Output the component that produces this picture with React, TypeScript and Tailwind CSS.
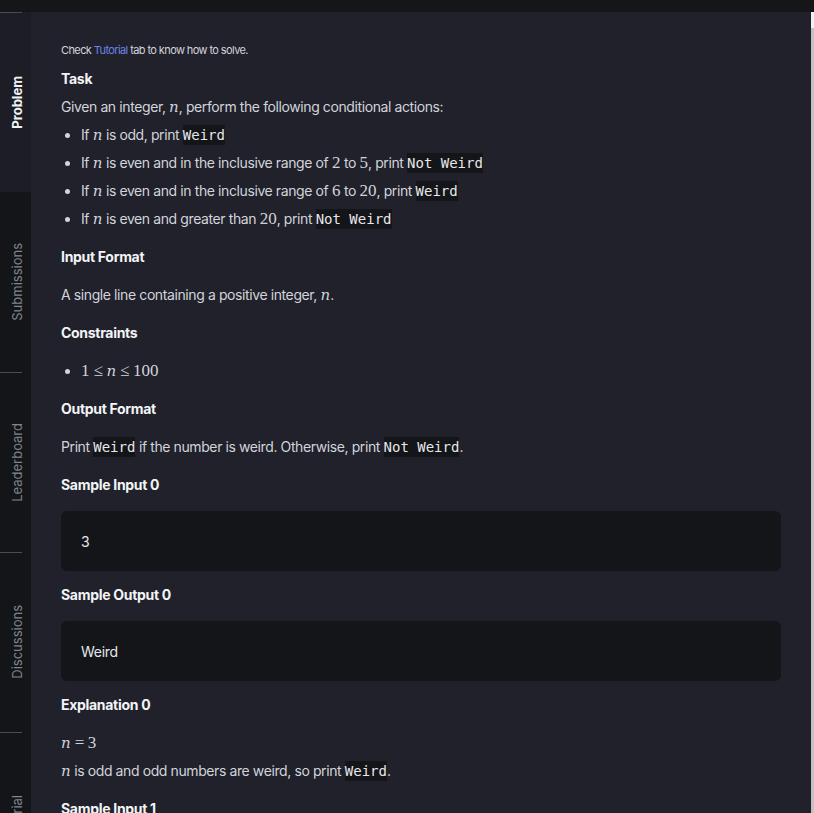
import React from "react";

const N = () => (
  <span className="font-['DejaVu_Serif',serif] italic text-[15px] tracking-normal">n</span>
);
const M = ({ children }: { children: React.ReactNode }) => (
  <span className="font-['Liberation_Serif',serif] text-[17px] tracking-normal">{children}</span>
);
const Rel = ({ children }: { children: React.ReactNode }) => (
  <span className="font-['Liberation_Serif',serif] text-[17px] mx-[4px]">{children}</span>
);
const C = ({ children }: { children: React.ReactNode }) => (
  <code className="bg-[#141519] py-[2px] font-['DejaVu_Sans_Mono',monospace] text-[14px] text-[#e6e7ea] tracking-normal">
    {children}
  </code>
);

const H = ({ children, className = "" }: { children: React.ReactNode; className?: string }) => (
  <div className={"h-[28px] leading-[28px] font-bold text-[14px] text-[#f3f4f6] tracking-[-0.3px] " + className}>{children}</div>
);
const P = ({ children, className = "" }: { children: React.ReactNode; className?: string }) => (
  <div className={"h-[28px] leading-[28px] text-[14px] text-[#d2d4da] whitespace-nowrap tracking-[-0.4px] " + className}>{children}</div>
);
const Li = ({ children, className = "" }: { children: React.ReactNode; className?: string }) => (
  <div className={"flex items-center h-[28px] text-[14px] text-[#d2d4da] whitespace-nowrap tracking-[-0.4px] " + className}>
    <span className="w-[5px] h-[5px] rounded-full bg-[#d2d4da] ml-[4px] mr-[11px] shrink-0" />
    <span className="leading-[28px]">{children}</span>
  </div>
);

const Tab = ({ label, active = false, line = true }: { label: string; active?: boolean; line?: boolean }) => (
  <div className={"relative h-[180px] shrink-0 flex items-center justify-center " + (active ? "bg-[#1c1d25]" : "bg-[#141519]")}>
    {line && <div className="absolute top-0 left-0 w-[22px] h-px bg-[#4b4c53]" />}
    <span
      className={
        "[writing-mode:vertical-rl] rotate-180 text-[13px] whitespace-nowrap pr-[4px] " +
        (active ? "font-bold text-[#f3f4f6]" : "text-[#7d868a]")
      }
    >
      {label}
    </span>
  </div>
);

export default function App() {
  return (
    <div className="w-[814px] h-[813px] overflow-hidden flex flex-col bg-[#20212b] font-['Inter',sans-serif]">
      <div className="h-[12px] shrink-0 bg-[#15161a]" />
      <div className="flex flex-1 min-h-0">
        <div className="w-[31px] shrink-0 flex flex-col overflow-hidden">
          <Tab label="Problem" active />
          <Tab label="Submissions" line={false} />
          <Tab label="Leaderboard" />
          <Tab label="Discussions" />
          <div className="relative h-[180px] shrink-0 flex items-start justify-center bg-[#141519]">
            <div className="absolute top-0 left-0 w-[22px] h-px bg-[#4b4c53]" />
            <span className="mt-[63px] [writing-mode:vertical-rl] rotate-180 text-[13px] whitespace-nowrap pr-[4px] text-[#7d868a]">
              Tutorial
            </span>
          </div>
        </div>
        <div className="flex-1 min-w-0 overflow-hidden pl-[30px] pr-[30px] pt-[30px]">
          <div className="h-[16px] leading-[16px] text-[11px] text-[#d2d4da] tracking-[-0.6px]">
            Check <span className="text-[#6b84e6]">Tutorial</span> tab to know how to solve.
          </div>
          <H className="mt-[7px]">Task</H>
          <P>
            Given an integer, <N />, perform the following conditional actions:
          </P>
          <Li>
            If <N /> is odd, print <C>Weird</C>
          </Li>
          <Li>
            If <N /> is even and in the inclusive range of <M>2</M> to <M>5</M>, print <C>Not Weird</C>
          </Li>
          <Li>
            If <N /> is even and in the inclusive range of <M>6</M> to <M>20</M>, print <C>Weird</C>
          </Li>
          <Li>
            If <N /> is even and greater than <M>20</M>, print <C>Not Weird</C>
          </Li>
          <H className="mt-[10px]">Input Format</H>
          <P className="mt-[10px]">
            A single line containing a positive integer, <N />.
          </P>
          <H className="mt-[10px]">Constraints</H>
          <Li className="mt-[10px]">
            <M>1</M>
            <Rel>≤</Rel>
            <N />
            <Rel>≤</Rel>
            <M>100</M>
          </Li>
          <H className="mt-[10px]">Output Format</H>
          <P className="mt-[10px]">
            Print <C>Weird</C> if the number is weird. Otherwise, print <C>Not Weird</C>.
          </P>
          <H className="mt-[10px]">Sample Input 0</H>
          <div className="mt-[12px] h-[60px] rounded-md bg-[#141519] flex items-center px-[20px] text-[14px] text-[#e6e7ea]">
            3
          </div>
          <H className="mt-[10px]">Sample Output 0</H>
          <div className="mt-[12px] h-[60px] rounded-md bg-[#141519] flex items-center px-[20px] text-[14px] text-[#e6e7ea] tracking-[-0.3px]">
            Weird
          </div>
          <H className="mt-[10px]">Explanation 0</H>
          <P className="mt-[10px]">
            <N />
            <Rel>=</Rel>
            <M>3</M>
          </P>
          <P>
            <N /> is odd and odd numbers are weird, so print <C>Weird</C>.
          </P>
          <H className="mt-[10px]">Sample Input 1</H>
        </div>
        <div className="w-[3px] shrink-0 bg-[#f1f1f1] flex flex-col">
          <div className="h-[16px]" />
          <div className="flex-1 bg-[#c1c1c1]" />
        </div>
      </div>
    </div>
  );
}
